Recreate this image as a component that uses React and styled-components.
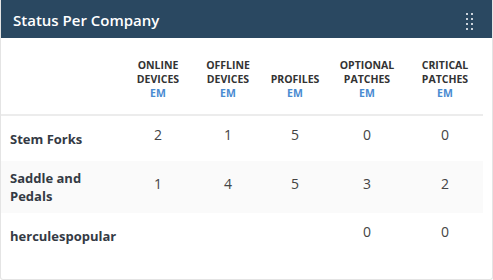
import React from 'react';
import styled, { createGlobalStyle } from 'styled-components';

const GlobalStyle = createGlobalStyle`
  html, body {
    margin: 0;
    padding: 0;
    background: #ffffff;
  }
  body {
    font-family: "Open Sans", "Liberation Sans", sans-serif;
  }
`

const columns = [
  { top: 'ONLINE', bottom: 'DEVICES' },
  { top: 'OFFLINE', bottom: 'DEVICES' },
  { top: '', bottom: 'PROFILES' },
  { top: 'OPTIONAL', bottom: 'PATCHES' },
  { top: 'CRITICAL', bottom: 'PATCHES' },
];

const companies = [
  { name: 'Stem Forks', values: [2, 1, 5, 0, 0] },
  { name: 'Saddle and Pedals', values: [1, 4, 5, 3, 2] },
  { name: 'herculespopular', values: ['', '', '', 0, 0] },
];

const DotsIcon = () => (
  <svg width="8" height="17" viewBox="0 0 8 17">
    {[0, 1, 2, 3].map(r => (
      <g key={r} fill="#c9d2db">
        <rect x="0" y={r * 5} width="2" height="2" />
        <rect x="5" y={r * 5} width="2" height="2" />
      </g>
    ))}
  </svg>
);

class App extends React.Component {
  render() {
    return (
      <Card>
        <GlobalStyle />
        <Header>
          <Title>Status Per Company</Title>
          <Handle><DotsIcon /></Handle>
        </Header>
        <Table>
          <HeadRow>
            <HeadCell />
            {columns.map((c, i) => (
              <HeadCell key={i}>
                {c.top && <span>{c.top}</span>}
                <span>{c.bottom}</span>
                <Em>EM</Em>
              </HeadCell>
            ))}
          </HeadRow>
          {companies.map((row, i) => (
            <Row key={row.name} striped={i % 2 === 1}>
              <NameCell>{row.name}</NameCell>
              {row.values.map((v, j) => (
                <NumCell key={j}>{v}</NumCell>
              ))}
            </Row>
          ))}
        </Table>
      </Card>
    )
  }
}

const Card = styled.div`
  box-sizing: border-box;
  width: 493px;
  height: 280px;
  border: 1px solid #e4e4e4;
  border-top: none;
  border-radius: 0 0 3px 3px;
  background: #fff;
  overflow: hidden;
`
const Header = styled.div`
  height: 38px;
  margin: 0 -1px;
  background-color: #2a4861;
  display: flex;
  align-items: center;
  justify-content: space-between;
  padding: 0 19px 0 13px;
`
const Title = styled.h3`
  margin: 0;
  color: #ffffff;
  font-size: 15px;
  font-weight: 600;
  padding-top: 1px;
`
const Handle = styled.div`
  display: flex;
  align-items: center;
  padding-top: 4px;
`
const Table = styled.div`
  width: 482px;
  display: flex;
  flex-direction: column;
`
const grid = `
  display: grid;
  grid-template-columns: 122px 70px 70px 64px 80px 76px;
`
const HeadRow = styled.div`
  ${grid}
  align-items: end;
  padding: 20px 0 14px;
  border-bottom: 2px solid #ececec;
`
const HeadCell = styled.div`
  display: flex;
  flex-direction: column;
  align-items: center;
  font-size: 10.5px;
  line-height: 14px;
  font-weight: 700;
  color: #333333;
  text-align: center;
`
const Em = styled.span`
  color: #4a8bd1;
`
const Row = styled.div`
  ${grid}
  align-items: center;
  min-height: 45px;
  background-color: ${props => props.striped ? '#fafafa' : '#ffffff'};
`
const NameCell = styled.div`
  padding: 8px 6px 8px 9px;
  font-size: 13px;
  line-height: 18px;
  font-weight: 700;
  color: #343a44;
`
const NumCell = styled.div`
  padding-bottom: 7px;
  text-align: center;
  font-size: 14px;
  line-height: 18px;
  color: #444444;
`

export default App;
